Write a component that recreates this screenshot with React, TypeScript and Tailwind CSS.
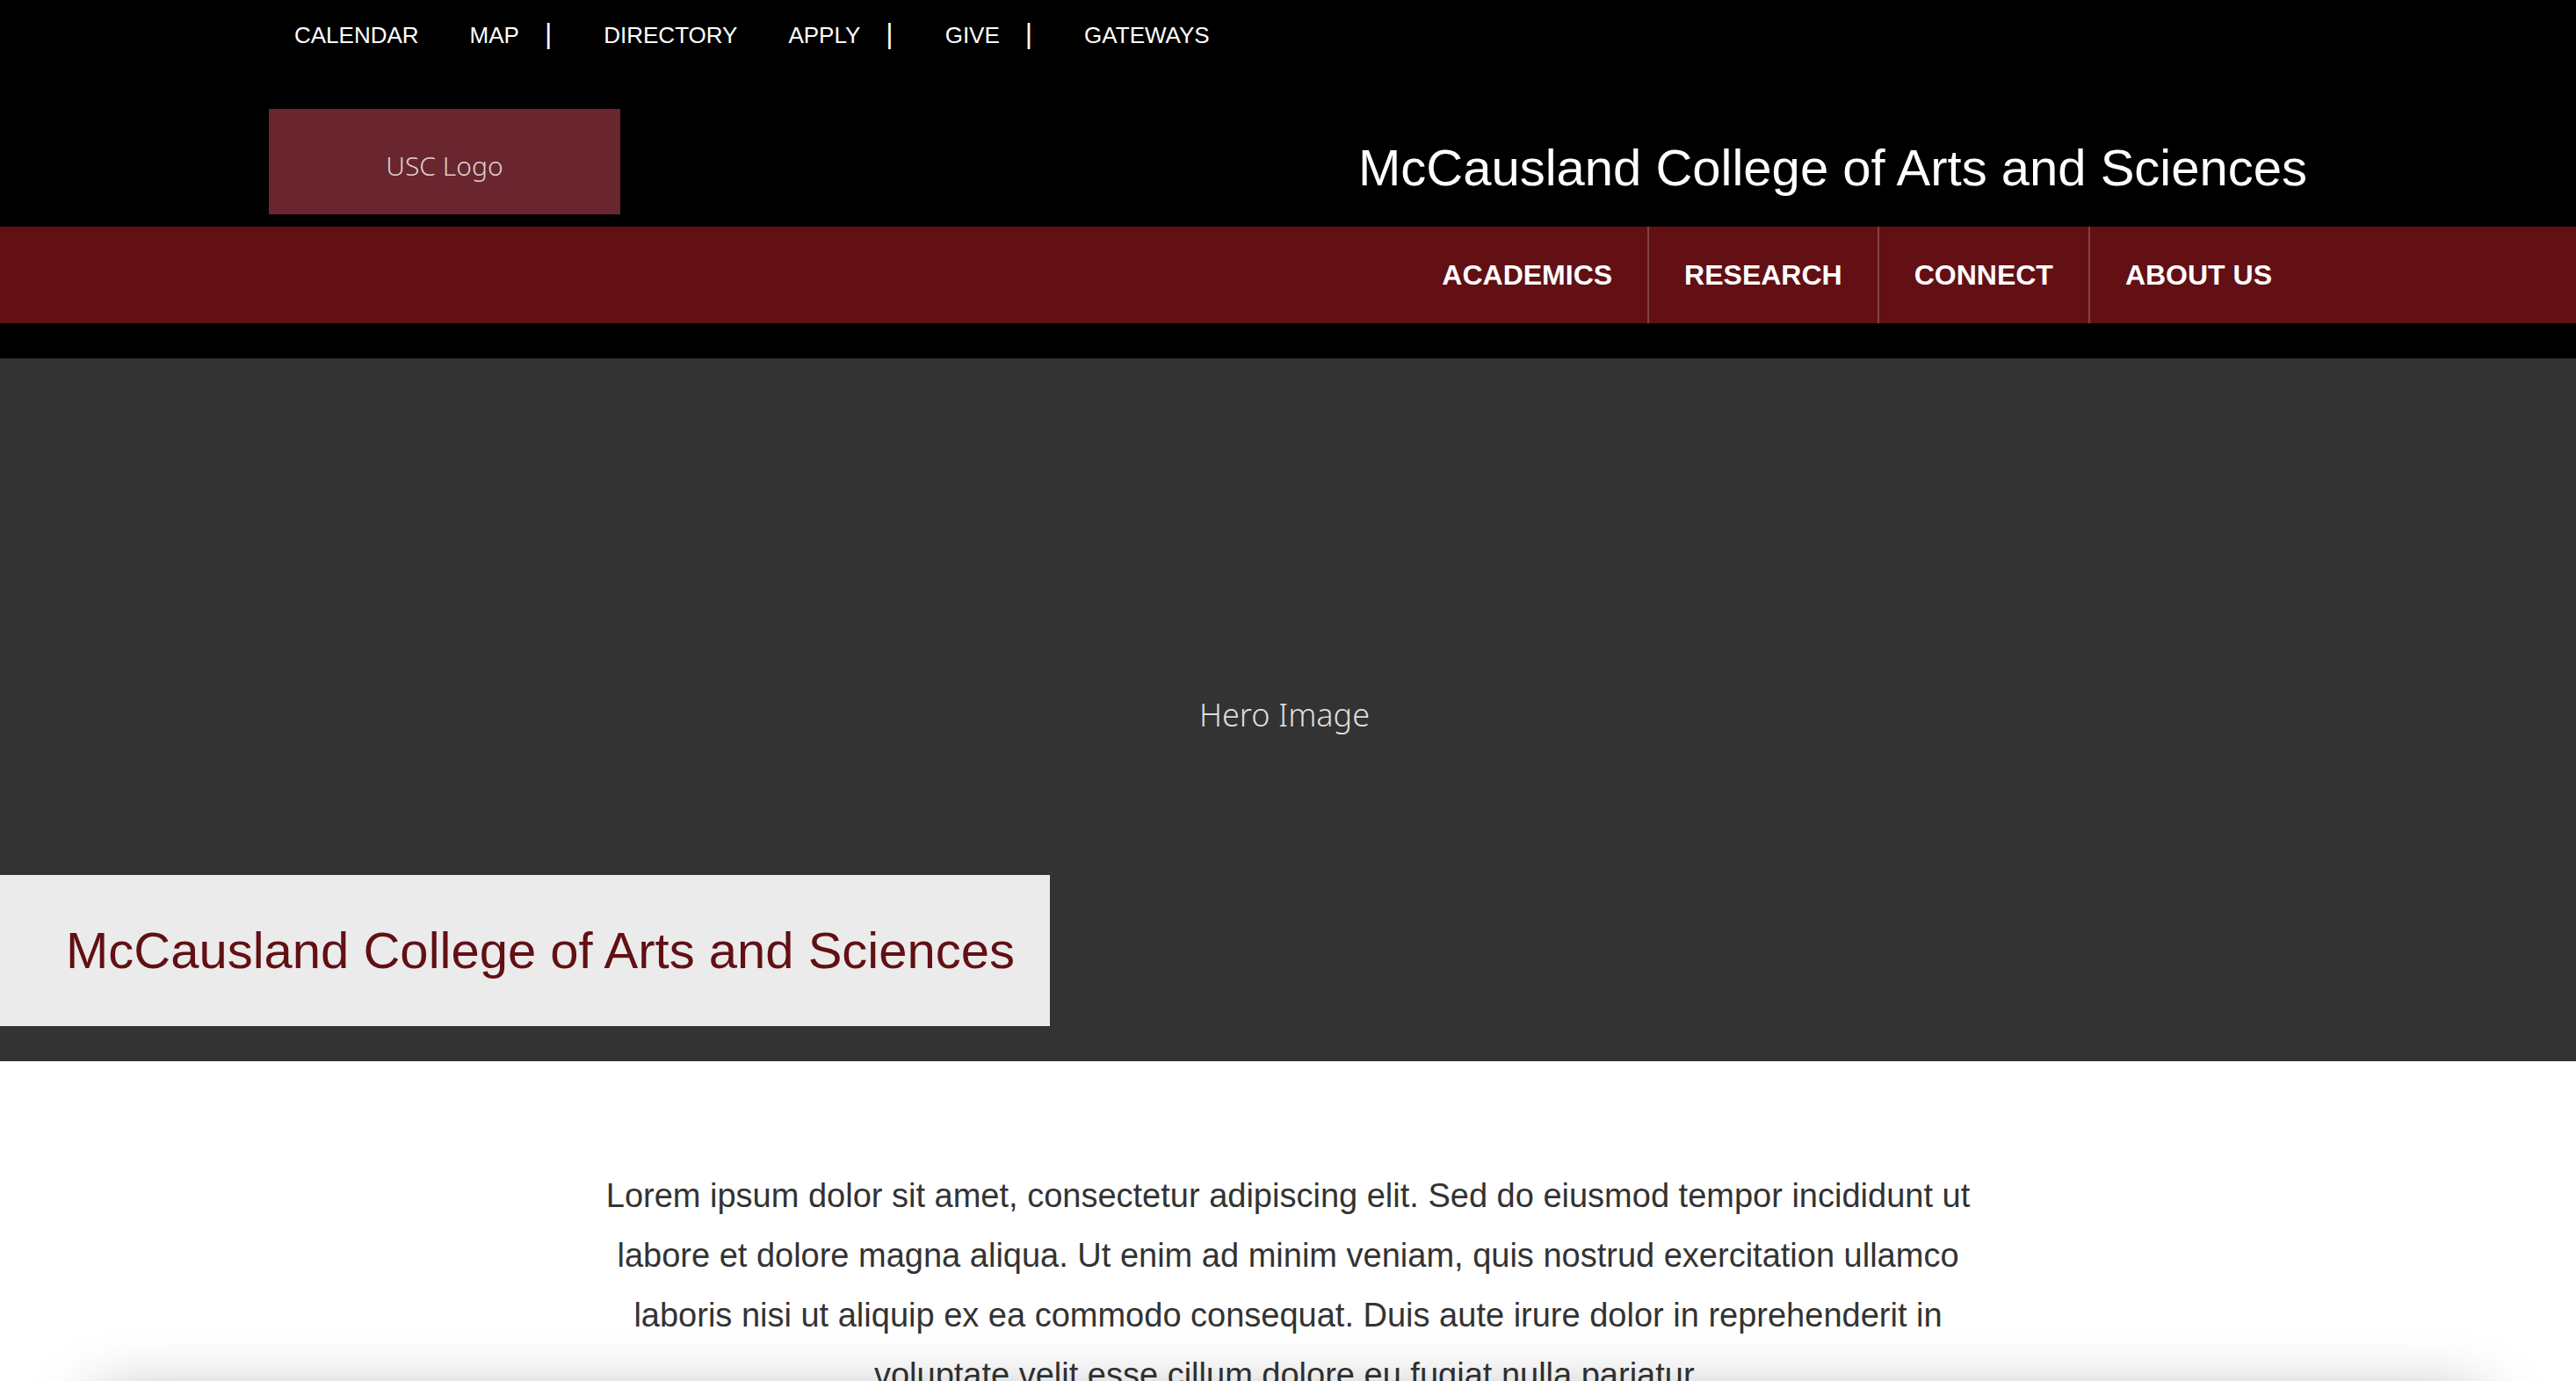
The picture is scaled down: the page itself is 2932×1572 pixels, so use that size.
const utilityLinks = [
  { label: 'CALENDAR', divider: false },
  { label: 'MAP', divider: true },
  { label: 'DIRECTORY', divider: false },
  { label: 'APPLY', divider: true },
  { label: 'GIVE', divider: true },
  { label: 'GATEWAYS', divider: false },
];

const mainLinks = ['ACADEMICS', 'RESEARCH', 'CONNECT', 'ABOUT US'];

function Header() {
  return (
    <header className="bg-black pb-10 text-white">
      <div className="mx-auto max-w-[2320px]">
        <nav aria-label="Utility">
          <ul className="flex h-[84px] items-baseline pt-[18px] text-[26px] leading-10">
            {utilityLinks.map((link) => (
              <li key={link.label} className="flex items-baseline">
                <a href="#" className="px-[29px]">
                  {link.label}
                </a>
                {link.divider && (
                  <span aria-hidden="true" className="pr-[30px] text-[32px]">
                    |
                  </span>
                )}
              </li>
            ))}
          </ul>
        </nav>
        <div className="flex items-center justify-between pt-10 pb-[14px]">
          <a
            href="#"
            className="flex h-[120px] w-[400px] items-center justify-center bg-[#69262f] pt-2 font-['Noto_Sans'] text-[30px] font-light text-[#decdcf]"
          >
            USC Logo
          </a>
          <p className="pt-[14px] text-[58px] leading-[70px]">McCausland College of Arts and Sciences</p>
        </div>
      </div>
      <nav aria-label="Main" className="bg-[#621014]">
        <ul className="mx-auto flex max-w-[2320px] justify-end divide-x-2 divide-[#814045]">
          {mainLinks.map((label) => (
            <li key={label}>
              <a href="#" className="block px-10 text-[32px] leading-[110px] font-bold">
                {label}
              </a>
            </li>
          ))}
        </ul>
      </nav>
    </header>
  );
}

function Hero() {
  return (
    <section className="relative flex h-[800px] items-center justify-center bg-[#333333]">
      <p className="pt-3 pr-2 font-['Noto_Sans'] text-[36px] font-light text-[#dedede]">Hero Image</p>
      <h1 className="absolute bottom-10 left-0 bg-[#ebebeb] pr-10 pl-[75px] text-[58px] leading-[172px] text-[#621014]">
        McCausland College of Arts and Sciences
      </h1>
    </section>
  );
}

export default function App() {
  return (
    <div className="relative h-screen overflow-hidden bg-white font-['Liberation_Sans',Arial,sans-serif]">
      <Header />
      <main>
        <Hero />
        <p className="mx-auto max-w-[1600px] pt-[119px] text-center text-[38px] leading-[68px] text-[#333333]">
          Lorem ipsum dolor sit amet, consectetur adipiscing elit. Sed do eiusmod tempor incididunt ut
          labore et dolore magna aliqua. Ut enim ad minim veniam, quis nostrud exercitation ullamco
          laboris nisi ut aliquip ex ea commodo consequat. Duis aute irure dolor in reprehenderit in
          voluptate velit esse cillum dolore eu fugiat nulla pariatur.
        </p>
      </main>
      <div
        aria-hidden="true"
        className="absolute inset-x-[110px] top-full h-40 shadow-[0_28px_80px_rgba(0,0,0,0.42)]"
      />
    </div>
  );
}
